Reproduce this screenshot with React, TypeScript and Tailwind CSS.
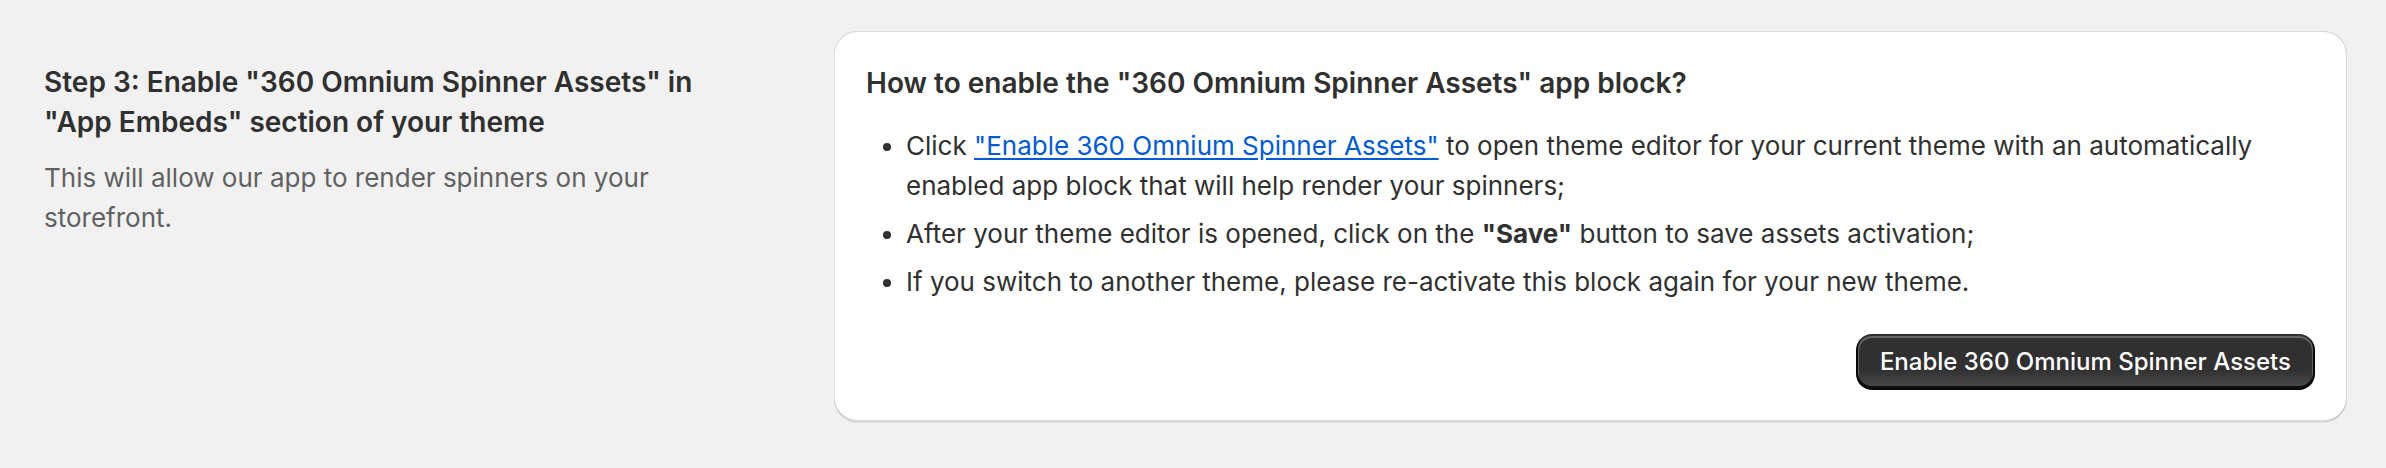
import React from "react";

export default function App() {
  return (
    <div className="min-h-[468px] w-full bg-[#f1f1f1] font-['Inter','Noto_Sans',sans-serif] text-[#303030] pt-[31px] pl-[44px] pr-[39px] flex items-start">
      <div className="w-[750px] shrink-0 pt-[31px] pr-[40px] flex flex-col gap-[16px]">
        <h2 className="text-[28px] leading-[40px] font-semibold text-[#303030]">
          Step 3: Enable "360 Omnium Spinner Assets" in "App Embeds" section of your theme
        </h2>
        <p className="text-[26px] leading-[40px] text-[#616161]">
          This will allow our app to render spinners on your storefront.
        </p>
      </div>
      <div className="ml-[40px] flex-1 bg-white rounded-[24px] p-[32px] flex flex-col shadow-[inset_1px_0_0_0_rgba(0,0,0,0.1),inset_-1px_0_0_0_rgba(0,0,0,0.13),inset_0_-2px_0_0_rgba(0,0,0,0.15),inset_0_1px_0_0_rgba(204,204,204,0.6),0_1px_0_0_rgba(26,26,26,0.07)]">
        <h3 className="text-[28px] leading-[40px] font-semibold text-[#303030]">
          How to enable the "360 Omnium Spinner Assets" app block?
        </h3>
        <ul className="mt-[23px] list-disc pl-[40px] text-[26px] leading-[40px] text-[#303030] flex flex-col gap-[8px]">
          <li>
            Click{" "}
            <a href="#" className="text-[#005bd3] underline underline-offset-[3px]">
              "Enable 360 Omnium Spinner Assets"
            </a>{" "}
            to open theme editor for your current theme with an automatically enabled app block that will help render your spinners;
          </li>
          <li>
            After your theme editor is opened, click on the <span className="font-bold">"Save"</span> button to save assets activation;
          </li>
          <li>If you switch to another theme, please re-activate this block again for your new theme.</li>
        </ul>
        <div className="mt-[32px] flex justify-end">
          <button className="h-[56px] px-[24px] rounded-[16px] text-white text-[24px] leading-[40px] font-medium bg-[#303030] bg-[linear-gradient(180deg,rgba(48,48,48,0)_63%,rgba(255,255,255,0.15)_100%)] shadow-[inset_0_-2px_0_2px_rgba(0,0,0,0.8),inset_0_0_0_2px_#303030,inset_0_1px_0_3px_rgba(255,255,255,0.25)]">
            Enable 360 Omnium Spinner Assets
          </button>
        </div>
      </div>
    </div>
  );
}
